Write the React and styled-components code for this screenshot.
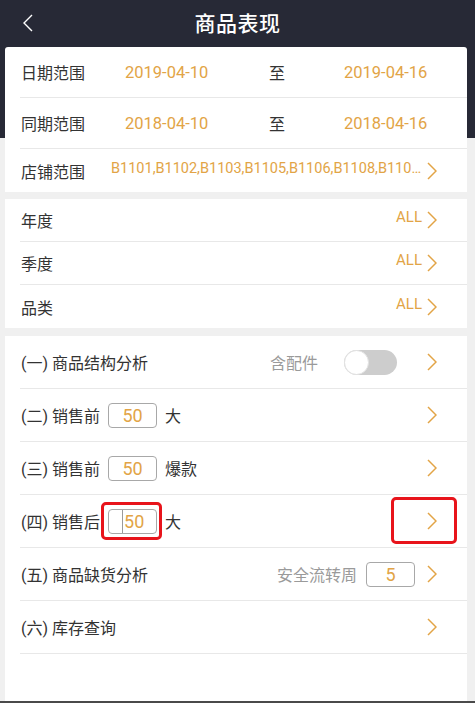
import React from 'react'
import styled, { createGlobalStyle } from 'styled-components'

const GlobalStyle = createGlobalStyle`
    html, body {
        margin: 0;
        padding: 0;
    }
    body {
        font-family: Roboto, "Noto Sans CJK SC", sans-serif;
        background: #f0f0f0;
    }
`;

const ORANGE = '#e2a446';

const Page = styled.div`
    width: 475px;
    height: 703px;
    box-sizing: border-box;
    background: linear-gradient(to bottom, #272936 0, #272936 138px, #f0f0f0 138px);
    display: flex;
    flex-direction: column;
    border-bottom: 2px solid #4a4a4a;
    overflow: hidden;
`;

const Header = styled.div`
    height: 47px;
    flex-shrink: 0;
    display: flex;
    align-items: center;
    justify-content: center;
    position: relative;
    padding-bottom: 3px;
    box-sizing: border-box;
`;

const Title = styled.h1`
    margin: 0;
    color: #fff;
    font-size: 21px;
    font-weight: 500;
    letter-spacing: 0.5px;
`;

const BackButton = styled.button`
    position: absolute;
    left: 22px;
    top: 13px;
    width: 14px;
    height: 20px;
    border: 0;
    padding: 0;
    background: none;
    display: flex;
`;

const Card = styled.div`
    background: #fff;
    margin: 0 8px ${p => p.gap || 0}px 5px;
    border-radius: ${p => p.top ? '3px 3px 0 0' : '0'};
    flex-shrink: 0;
    ${p => p.grow && 'flex: 1;'}
`;

const Row = styled.div`
    height: ${p => p.h}px;
    box-sizing: border-box;
    margin-left: 15px;
    padding-left: 1px;
    padding-right: 30px;
    display: flex;
    align-items: center;
    border-bottom: ${p => p.last ? '0' : '1px solid #e8e8e8'};
    font-size: 16px;
    color: #333;
`;

const DateRow = styled(Row)`
    display: grid;
    grid-template-columns: 104px 144px 75px auto;
    align-items: center;
`;

const Label = styled.span`
    width: ${p => p.w ? p.w + 'px' : 'auto'};
    flex-shrink: 0;
    white-space: nowrap;
`;

const Value = styled.span`
    color: ${ORANGE};
    font-size: 16.5px;
`;

const StoreList = styled.span`
    flex: 1;
    color: ${ORANGE};
    font-size: 14.5px;
    white-space: nowrap;
    margin-right: 5px;
    position: relative;
    top: -2px;
`;

const Spacer = styled.span`
    flex: 1;
`;

const All = styled.span`
    color: ${ORANGE};
    font-size: 15px;
    margin-right: 5px;
    position: relative;
    top: -3px;
`;

const Hint = styled.span`
    color: #9a9a9a;
    font-size: 16px;
    margin-right: ${p => p.mr}px;
`;

const Toggle = styled.span`
    width: 53px;
    height: 25px;
    border-radius: 13px;
    background: #cdcdcd;
    position: relative;
    margin-right: 30px;
    flex-shrink: 0;
    &::after {
        content: '';
        position: absolute;
        left: 0;
        top: 0;
        width: 25px;
        height: 25px;
        box-sizing: border-box;
        border-radius: 50%;
        background: #fff;
        border: 1px solid #e2e2e2;
    }
`;

const NumBox = styled.span`
    width: 49px;
    height: 25px;
    box-sizing: border-box;
    border: 1px solid #a8a8a8;
    border-radius: 4px;
    display: flex;
    align-items: center;
    justify-content: ${p => p.focused ? 'flex-start' : 'center'};
    padding-left: ${p => p.focused ? '13px' : '0'};
    color: ${ORANGE};
    font-size: 18px;
    margin: 0 ${p => p.mr ?? 8}px 0 ${p => p.ml ?? 8}px;
    position: relative;
    flex-shrink: 0;
`;

const Caret = styled.span`
    width: 1px;
    height: 23px;
    background: #9a9a9a;
    margin-right: 1px;
`;

const Highlight = styled.span`
    position: absolute;
    top: ${p => p.t}px;
    right: ${p => p.r}px;
    bottom: ${p => p.b}px;
    left: ${p => p.l}px;
    border: 3px solid #e8141b;
    border-radius: 5px;
    pointer-events: none;
`;

const ChevronWrap = styled.span`
    position: relative;
    display: flex;
    flex-shrink: 0;
`;

const Chevron = ({ color = ORANGE }) => (
    <svg width="10" height="18" viewBox="0 0 10 18">
        <polyline points="1,1 9,9 1,17" fill="none" stroke={color} strokeWidth="1.5" />
    </svg>
);

const rows = [
    { label: '(一) 商品结构分析', extra: 'toggle' },
    { label: '(二) 销售前', box: '50', after: '大' },
    { label: '(三) 销售前', box: '50', after: '爆款' },
    { label: '(四) 销售后', box: '50', after: '大', focused: true },
    { label: '(五) 商品缺货分析', extra: 'stock' },
    { label: '(六) 库存查询' },
];

export default function App() {
    return (
        <Page>
            <GlobalStyle />
            <Header>
                <BackButton>
                    <svg width="14" height="20" viewBox="0 0 14 20">
                        <polyline points="10,2 2,10 10,18" fill="none" stroke="#fff" strokeWidth="1.4" />
                    </svg>
                </BackButton>
                <Title>商品表现</Title>
            </Header>

            <Card top gap={7}>
                <DateRow h={51}>
                    <Label>日期范围</Label>
                    <Value>2019-04-10</Value>
                    <Label>至</Label>
                    <Value>2019-04-16</Value>
                </DateRow>
                <DateRow h={51}>
                    <Label>同期范围</Label>
                    <Value>2018-04-10</Value>
                    <Label>至</Label>
                    <Value>2018-04-16</Value>
                </DateRow>
                <Row h={43} last>
                    <Label w={90}>店铺范围</Label>
                    <StoreList>B1101,B1102,B1103,B1105,B1106,B1108,B110…</StoreList>
                    <ChevronWrap><Chevron /></ChevronWrap>
                </Row>
            </Card>

            <Card gap={8}>
                {['年度', '季度', '品类'].map((t, i) => (
                    <Row key={t} h={43} last={i === 2}>
                        <Label>{t}</Label>
                        <Spacer />
                        <All>ALL</All>
                        <ChevronWrap><Chevron /></ChevronWrap>
                    </Row>
                ))}
            </Card>

            <Card grow>
                {rows.map((r, i) => (
                    <Row key={i} h={53}>
                        <Label>{r.label}</Label>
                        {r.box && (
                            <NumBox focused={r.focused}>
                                {r.focused && <Caret />}
                                {r.box}
                                {r.focused && <Highlight t={-8} r={-6} b={-7} l={-8} />}
                            </NumBox>
                        )}
                        {r.after && <Label>{r.after}</Label>}
                        <Spacer />
                        {r.extra === 'toggle' && (
                            <>
                                <Hint mr={26}>含配件</Hint>
                                <Toggle />
                            </>
                        )}
                        {r.extra === 'stock' && (
                            <>
                                <Hint mr={0}>安全流转周</Hint>
                                <NumBox ml={9} mr={12}>5</NumBox>
                            </>
                        )}
                        <ChevronWrap>
                            <Chevron />
                            {r.focused && <Highlight t={-15} r={-20} b={-14} l={-36} />}
                        </ChevronWrap>
                    </Row>
                ))}
            </Card>
        </Page>
    )
}
